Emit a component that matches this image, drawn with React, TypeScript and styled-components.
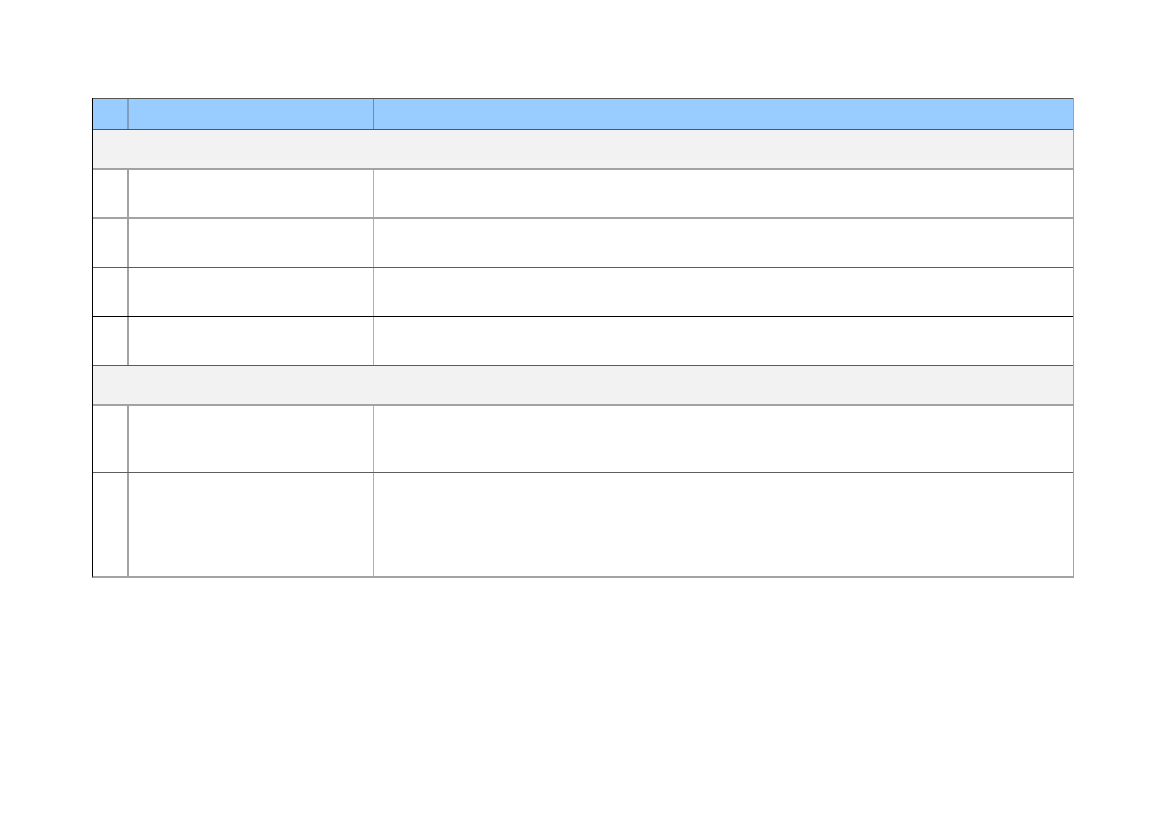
import React from "react";
import styled, { createGlobalStyle } from "styled-components";

const Global = createGlobalStyle`
  html, body { margin: 0; padding: 0; background: #ffffff; }
  body { font-family: "Liberation Sans", Arial, sans-serif; }
`;

const Page = styled.div`
  padding: 98px 0 0 92px;
`;

const Table = styled.div`
  width: 982px;
  display: flex;
  flex-direction: column;
  border-left: 1px solid #000000;
  border-right: 1px solid #a3a3a3;
  border-bottom: 2px solid #a3a3a3;
  box-sizing: border-box;
`;

type RowProps = { $h: number; $line: string; $lw: number };

const Row = styled.div<RowProps>`
  display: grid;
  grid-template-columns: 36px 245px 1fr;
  height: ${(p) => p.$h}px;
  box-sizing: border-box;
  border-top: ${(p) => p.$lw}px solid ${(p) => p.$line};
`;

const HeaderRow = styled(Row)`
  background: #99ccff;
`;

const GroupRow = styled.div<RowProps>`
  height: ${(p) => p.$h}px;
  box-sizing: border-box;
  border-top: ${(p) => p.$lw}px solid ${(p) => p.$line};
  background: #f2f2f2;
`;

const Cell = styled.div<{ $divider?: string; $dw?: number }>`
  box-sizing: border-box;
  border-right: ${(p) => (p.$divider ? `${p.$dw ?? 1}px solid ${p.$divider}` : "none")};
`;

const rows: Array<{ kind: "group" | "row"; h: number; line: string; lw: number }> = [
  { kind: "group", h: 39, line: "#555555", lw: 1 },
  { kind: "row", h: 49, line: "#a3a3a3", lw: 2 },
  { kind: "row", h: 50, line: "#a3a3a3", lw: 2 },
  { kind: "row", h: 49, line: "#5e5e5e", lw: 1 },
  { kind: "row", h: 49, line: "#000000", lw: 1 },
  { kind: "group", h: 39, line: "#5a5a5a", lw: 1 },
  { kind: "row", h: 68, line: "#a3a3a3", lw: 2 },
  { kind: "row", h: 104, line: "#5e5e5e", lw: 1 },
];

export default function App() {
  return (
    <Page>
      <Global />
      <Table>
        <HeaderRow $h={31} $line="#555555" $lw={1}>
          <Cell $divider="#7f9dbd" $dw={2} />
          <Cell $divider="#6d8bab" $dw={1} />
          <Cell />
        </HeaderRow>
        {rows.map((r, i) =>
          r.kind === "group" ? (
            <GroupRow key={i} $h={r.h} $line={r.line} $lw={r.lw} />
          ) : (
            <Row key={i} $h={r.h} $line={r.line} $lw={r.lw}>
              <Cell $divider="#a3a3a3" $dw={2} />
              <Cell $divider="#b0b0b0" $dw={1} />
              <Cell />
            </Row>
          )
        )}
      </Table>
    </Page>
  );
}
